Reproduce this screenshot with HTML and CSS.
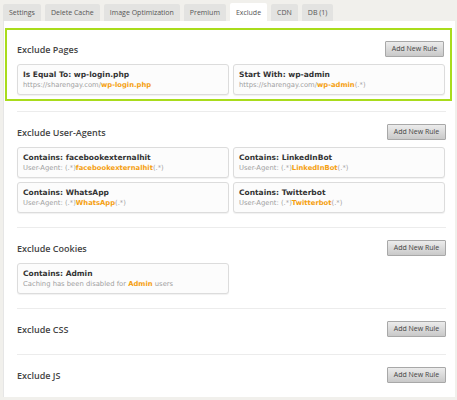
FILE: index.html
```html
<!DOCTYPE html>
<html>
<head>
<meta charset="utf-8">
<link rel="stylesheet" href="styles.css">
</head>
<body>
<div class="tabs">
  <div class="tab">Settings</div>
  <div class="tab">Delete Cache</div>
  <div class="tab">Image Optimization</div>
  <div class="tab">Premium</div>
  <div class="tab active">Exclude</div>
  <div class="tab">CDN</div>
  <div class="tab">DB (1)</div>
</div>
<div class="panel">
  <div class="section highlight">
    <div class="head"><span class="title">Exclude Pages</span><span class="btn">Add New Rule</span></div>
    <div class="cards">
      <div class="card"><div class="ct">Is Equal To: wp-login.php</div><div class="cs">https://sharengay.com/<b>wp-login.php</b></div></div>
      <div class="card"><div class="ct">Start With: wp-admin</div><div class="cs">https://sharengay.com/<b>wp-admin</b>(.*)</div></div>
    </div>
  </div>
  <div class="section">
    <div class="head"><span class="title">Exclude User-Agents</span><span class="btn">Add New Rule</span></div>
    <div class="cards">
      <div class="card"><div class="ct">Contains: facebookexternalhit</div><div class="cs">User-Agent: (.*)<b>facebookexternalhit</b>(.*)</div></div>
      <div class="card"><div class="ct">Contains: LinkedInBot</div><div class="cs">User-Agent: (.*)<b>LinkedInBot</b>(.*)</div></div>
      <div class="card"><div class="ct">Contains: WhatsApp</div><div class="cs">User-Agent: (.*)<b>WhatsApp</b>(.*)</div></div>
      <div class="card"><div class="ct">Contains: Twitterbot</div><div class="cs">User-Agent: (.*)<b>Twitterbot</b>(.*)</div></div>
    </div>
  </div>
  <div class="section">
    <div class="head"><span class="title">Exclude Cookies</span><span class="btn">Add New Rule</span></div>
    <div class="cards">
      <div class="card"><div class="ct">Contains: Admin</div><div class="cs">Caching has been disabled for <b>Admin</b> users</div></div>
    </div>
  </div>
  <div class="section empty">
    <div class="head"><span class="title">Exclude CSS</span><span class="btn">Add New Rule</span></div>
  </div>
  <div class="section empty last">
    <div class="head"><span class="title">Exclude JS</span><span class="btn">Add New Rule</span></div>
  </div>
</div>
</body>
</html>
```
FILE: styles.css
```css
* { box-sizing: border-box; }
html, body { margin: 0; padding: 0; }
body {
  background: #f1f0ec;
  font-family: "Open Sans", "Liberation Sans", sans-serif;
  width: 457px;
  height: 400px;
  overflow: hidden;
}
.tabs {
  display: flex;
  gap: 4px;
  padding: 4px 0 0 3px;
  height: 21px;
}
.tab {
  background: #e3e3e1;
  color: #555;
  font-size: 7px;
  height: 17px;
  line-height: 17px;
  padding: 0 6px;
  border-radius: 2px 2px 0 0;
}
.tab.active {
  background: #fff;
  height: 20px;
  margin-top: -1px;
  line-height: 19px;
}
.panel {
  background: #fff;
  margin-left: 3px;
  width: 452px;
  height: 376px;
  padding: 7px 0 0 1px;
  border-left: 1px solid #e6e6e6;
}
.section {
  margin: 0 9px 0 12px;
  border-top: 1px solid #ececec;
  padding: 12px 0 14px 0;
}
.section.highlight {
  margin: 0 3px 10px 0;
  border: 2px solid #a9dc1c;
  padding: 11px 6px 4px 10px;
}
.section.empty { padding-bottom: 17px; }
.section.last { padding-bottom: 0; }
.head {
  display: flex;
  justify-content: space-between;
  align-items: center;
  height: 16px;
}
.title {
  font-size: 9px;
  font-weight: 600;
  color: #444;
}
.btn {
  width: 59px;
  height: 16px;
  line-height: 14px;
  text-align: center;
  font-size: 7px;
  color: #444;
  border: 1px solid #a8a8a8;
  border-radius: 1px;
  background: linear-gradient(#ececec, #c9c9c9);
}
.cards {
  display: grid;
  grid-template-columns: 212px 212px;
  gap: 4px;
  margin-top: 7px;
}
.card {
  height: 31px;
  border: 1px solid #dcdcdc;
  border-radius: 3px;
  background: #fcfcfc;
  box-shadow: 0 1px 1px rgba(0,0,0,0.06);
  padding: 4px 5px;
  font-family: "DejaVu Sans", Verdana, sans-serif;
}
.ct {
  font-size: 7.5px;
  font-weight: bold;
  color: #333;
  line-height: 11px;
}
.cs {
  font-size: 6.8px;
  color: #a0a0a0;
  line-height: 10px;
}
.cs b { color: #f5a011; }
```
